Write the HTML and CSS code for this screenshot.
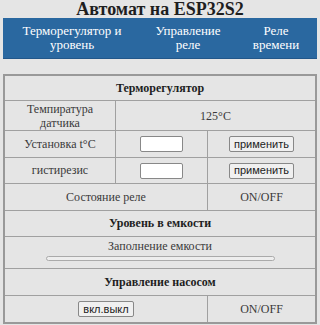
FILE: index.html
```html
<!DOCTYPE html>
<html>
<head>
    <meta charset="UTF-8">
    <meta name="viewport" content="width=device-width, initial-scale=1.0">
    <title>Автомат на ESP32S2</title>
    <link rel="stylesheet" href="styles.css">
</head>
<body>
    <h1>Автомат на ESP32S2</h1>

    <div class="nav">
        <div class="nav-item">Терморегулятор и уровень</div>
        <div class="nav-item">Управление реле</div>
        <div class="nav-item">Реле времени</div>
    </div>

    <table class="panel">
        <tr class="head first">
            <td colspan="3">Терморегулятор</td>
        </tr>
        <tr class="tall">
            <td class="name">Темпиратура датчика</td>
            <td colspan="2">125°C</td>
        </tr>
        <tr class="r27">
            <td class="name">Установка t°C</td>
            <td class="mid"><input type="text" class="field"></td>
            <td class="last"><button class="btn">применить</button></td>
        </tr>
        <tr>
            <td class="name">гистирезис</td>
            <td class="mid"><input type="text" class="field"></td>
            <td class="last"><button class="btn">применить</button></td>
        </tr>
        <tr class="r27">
            <td colspan="2">Состояние реле</td>
            <td class="last">ON/OFF</td>
        </tr>
        <tr class="head">
            <td colspan="3">Уровень в емкости</td>
        </tr>
        <tr class="level">
            <td colspan="3">
                Заполнение емкости
                <div class="bar"><div class="bar-fill" style="width: 0%"></div></div>
            </td>
        </tr>
        <tr class="head r27">
            <td colspan="3">Управление насосом</td>
        </tr>
        <tr class="r27">
            <td colspan="2"><button class="btn">вкл.выкл</button></td>
            <td class="last">ON/OFF</td>
        </tr>
    </table>
</body>
</html>
```

FILE: styles.css
```css
body {
    margin: 0 3px;
    background-color: #e5e5e5;
    font-family: 'Liberation Serif', 'Times New Roman', serif;
    color: #3a3a3a;
}
h1 {
    margin: 0;
    height: 18px;
    font-size: 18px;
    line-height: 18px;
    text-align: center;
    color: #1e1e1e;
}
.nav {
    display: grid;
    grid-template-columns: 138px 94px 1fr;
    align-items: center;
    height: 40px;
    margin-bottom: 15px;
    background: #2a68a0;
    border-bottom: 1px solid #22578a;
}
.nav-item {
    padding: 0 6px;
    color: #fff;
    font-size: 13px;
    line-height: 14px;
    text-align: center;
}
.panel {
    width: 100%;
    border-collapse: collapse;
    border: 2px solid #999;
    font-size: 12px;
    text-align: center;
}
.panel td {
    height: 25px;
    padding: 0 4px;
    border: 1px solid #a0a0a0;
}
.panel .name {
    width: 102px;
}
.panel .last {
    width: 99px;
}
.panel .r27 td {
    height: 26px;
}
.panel .first td {
    height: 24px;
}
.panel .head td {
    font-weight: bold;
    color: #1e1e1e;
}
.panel .tall td {
    height: 29px;
    line-height: 14px;
}
.panel .level td {
    height: 29px;
    vertical-align: top;
    padding-top: 2px;
    line-height: 14px;
}
.field {
    width: 43px;
    height: 16px;
    margin: 0;
    padding: 0;
    box-sizing: border-box;
    background: #fff;
    border: 1px solid #888;
    border-radius: 2px;
    vertical-align: middle;
}
.btn {
    height: 16px;
    padding: 0 4px;
    margin: 0;
    font-family: 'Liberation Sans', Arial, sans-serif;
    font-size: 11px;
    line-height: 13px;
    color: #222;
    background: #f0f0f0;
    border: 1px solid #888;
    border-radius: 2px;
    vertical-align: middle;
}
.bar {
    width: 229px;
    height: 5px;
    margin: 3px auto 0;
    background: #eee;
    border: 1px solid #aaa;
    border-radius: 3px;
    box-sizing: border-box;
    overflow: hidden;
}
.bar-fill {
    height: 100%;
    background: #2a68a0;
}
```
